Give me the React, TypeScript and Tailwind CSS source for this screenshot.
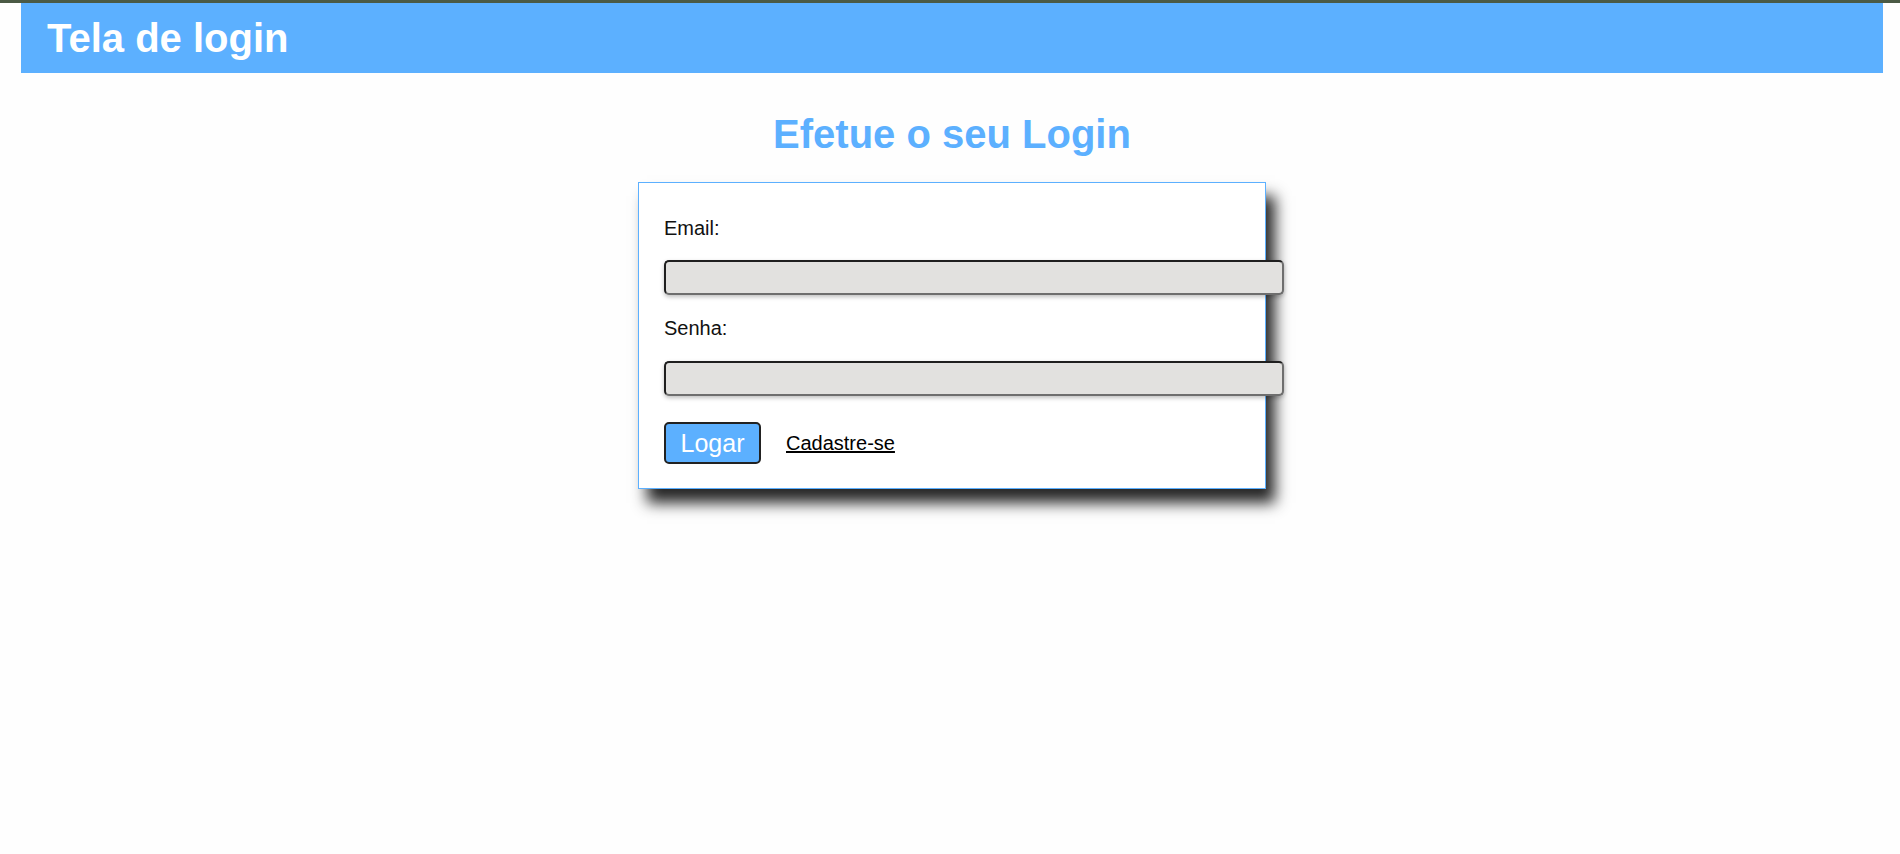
export default function App() {
  return (
    <div className="min-h-screen w-full bg-[#fefefe] font-['Liberation_Sans',Arial,sans-serif]">
      <div className="h-[3px] w-full bg-[#4b5a45]" />
      <div className="ml-[21px] mr-[17px]">
        <header className="h-[70px] bg-[#5cb0ff] pl-[26px] pt-[12px]">
          <h1 className="text-[40px] font-bold leading-[46px] text-white">Tela de login</h1>
        </header>
        <main className="flex flex-col items-center">
          <h2 className="mt-[38px] text-[40px] font-bold leading-[46px] text-[#5cb0ff]">Efetue o seu Login</h2>
          <form
            className="mt-[25px] w-[628px] border border-[#5cb0ff] bg-white px-[25px] pb-[24px] pt-[34px] shadow-[9px_14px_14px_rgba(0,0,0,0.85)]"
            onSubmit={(e) => e.preventDefault()}
          >
            <label className="block text-[20px] leading-[23px] text-[#111]">Email:</label>
            <input
              type="email"
              className="mt-[20px] block h-[35px] w-[620px] rounded-[5px] border-2 border-t-[#1f1f1f] border-l-[#1f1f1f] border-b-[#6e6e6e] border-r-[#6e6e6e] bg-[#e2e1df] px-[20px] shadow-[0_2px_4px_rgba(0,0,0,0.25)] outline-none"
            />
            <label className="mt-[22px] block text-[20px] leading-[23px] text-[#111]">Senha:</label>
            <input
              type="password"
              className="mt-[21px] block h-[35px] w-[620px] rounded-[5px] border-2 border-t-[#1f1f1f] border-l-[#1f1f1f] border-b-[#6e6e6e] border-r-[#6e6e6e] bg-[#e2e1df] px-[20px] shadow-[0_2px_4px_rgba(0,0,0,0.25)] outline-none"
            />
            <div className="mt-[26px] flex items-center gap-[25px]">
              <button
                type="submit"
                className="h-[42px] w-[97px] rounded-[5px] border-2 border-[#222] bg-[#5cb0ff] text-[25px] leading-none text-white"
              >
                Logar
              </button>
              <a href="#" className="text-[20px] leading-[23px] text-black underline">
                Cadastre-se
              </a>
            </div>
          </form>
        </main>
      </div>
    </div>
  );
}
